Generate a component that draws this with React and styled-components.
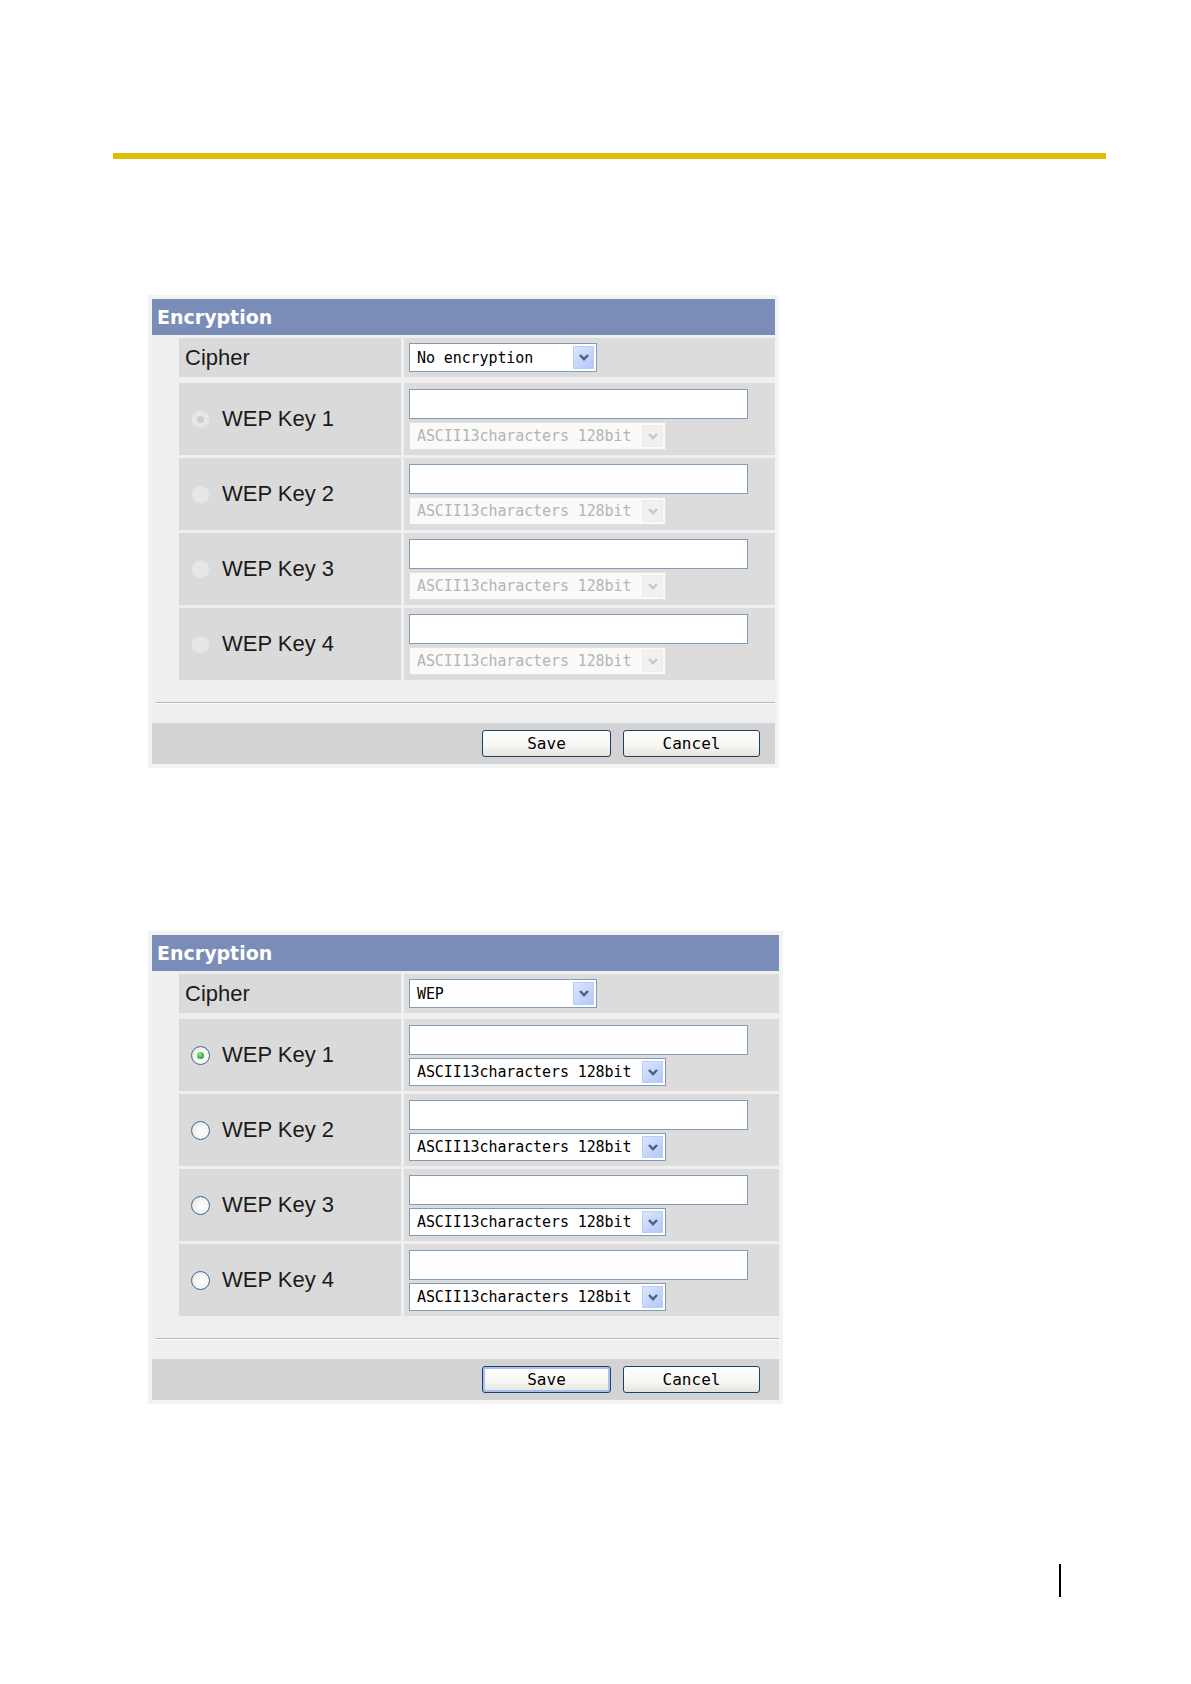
import styled, { createGlobalStyle } from "styled-components";

const GlobalStyle = createGlobalStyle`
  body {
    margin: 0;
    background: #ffffff;
  }
`;

const panels = [
  { cipher: "No encryption", disabled: true, width: 623, gap: 136, pad: 15 },
  { cipher: "WEP", disabled: false, width: 627, gap: 163, pad: 19, focused: true },
];

const keys = [1, 2, 3, 4];

function Chevron({ disabled }) {
  return (
    <svg width="12" height="9" viewBox="0 0 12 9">
      <path
        d="M2 2 L6 6.2 L10 2"
        fill="none"
        stroke={disabled ? "#c9c9c9" : "#4d6185"}
        strokeWidth="2.4"
      />
    </svg>
  );
}

function Select({ value, width, height, disabled }) {
  return (
    <SelectBox $width={width} $height={height} $disabled={disabled}>
      <SelectText $disabled={disabled}>{value}</SelectText>
      <ArrowBox $disabled={disabled}>
        <Chevron disabled={disabled} />
      </ArrowBox>
    </SelectBox>
  );
}

function Panel({ panel }) {
  return (
    <Frame $gap={panel.gap}>
      <Inner $width={panel.width}>
        <Header>Encryption</Header>
        <Body>
          <Row>
            <LabelCell>
              <Label>Cipher</Label>
            </LabelCell>
            <ValueCell $short>
              <Select value={panel.cipher} width={188} height={29} />
            </ValueCell>
          </Row>
          {keys.map((n) => (
            <Row key={n} $tall>
              <LabelCell $withRadio>
                <Radio $disabled={panel.disabled} $checked={n === 1} />
                <Label>WEP Key {n}</Label>
              </LabelCell>
              <ValueCell>
                <TextInput />
                <Select
                  value="ASCII13characters 128bit"
                  width={257}
                  height={28}
                  disabled={panel.disabled}
                />
              </ValueCell>
            </Row>
          ))}
        </Body>
        <Separator />
        <Footer $pad={panel.pad}>
          <Button $focused={panel.focused} $width={129}>
            Save
          </Button>
          <Button $width={137}>Cancel</Button>
        </Footer>
      </Inner>
    </Frame>
  );
}

function App() {
  return (
    <Page>
      <GlobalStyle />
      <Rule />
      {panels.map((p, i) => (
        <Panel key={i} panel={p} />
      ))}
      <PageMark />
    </Page>
  );
}

export default App;

const Page = styled.div`
  padding: 153px 0 80px 113px;
  font-family: "Liberation Sans", Arial, sans-serif;
`;

const Rule = styled.div`
  width: 993px;
  height: 6px;
  background-color: #dfbd05;
`;

const Frame = styled.div`
  margin: ${(p) => p.$gap}px 0 0 35px;
  padding: 4px;
  background-color: #f3f3f3;
  display: inline-block;
`;

const Inner = styled.div`
  width: ${(p) => p.$width}px;
  background-color: #efefef;
`;

const Header = styled.div`
  height: 36px;
  display: flex;
  align-items: center;
  padding-left: 5px;
  background-color: #7a8db8;
  color: #ffffff;
  font-family: "DejaVu Sans", Verdana, sans-serif;
  font-weight: bold;
  font-size: 19px;
`;

const Body = styled.div`
  display: flex;
  flex-direction: column;
  gap: 3px;
  padding: 3px 0 0 27px;

  & > *:first-child {
    margin-bottom: 3px;
  }
`;

const Row = styled.div`
  display: flex;
  gap: 3px;
  height: ${(p) => (p.$tall ? 72 : 39)}px;
`;

const LabelCell = styled.div`
  width: 222px;
  display: flex;
  align-items: center;
  gap: 12px;
  padding-left: ${(p) => (p.$withRadio ? 12 : 6)}px;
  background-color: #dadada;
  box-sizing: border-box;
`;

const Label = styled.span`
  font-size: 22px;
  color: #1a1a1a;
`;

const ValueCell = styled.div`
  flex: 1;
  display: flex;
  flex-direction: column;
  gap: 3px;
  padding: ${(p) => (p.$short ? "5px" : "6px")} 5px 0 5px;
  background-color: #dcdcdc;
`;

const Radio = styled.span`
  position: relative;
  width: 19px;
  height: 19px;
  flex: none;
  border-radius: 50%;
  box-sizing: border-box;
  border: 1px solid ${(p) => (p.$disabled ? "#dedede" : "#3e6a96")};
  background: ${(p) =>
    p.$disabled
      ? "#e6e6e6"
      : "radial-gradient(circle at 60% 60%, #ffffff 0%, #f2f2ee 55%, #d6d6ce 100%)"};

  &::after {
    content: "";
    display: ${(p) => (p.$checked ? "block" : "none")};
    position: absolute;
    left: 5px;
    top: 5px;
    width: 7px;
    height: 7px;
    border-radius: 50%;
    background: ${(p) =>
      p.$disabled
        ? "#cdcdcd"
        : "radial-gradient(circle at 40% 35%, #8cf08c 0%, #28a428 70%, #1d8a1d 100%)"};
  }
`;

const TextInput = styled.div`
  width: 339px;
  height: 30px;
  box-sizing: border-box;
  border: 1px solid #7f9db9;
  background-color: #ffffff;
`;

const SelectBox = styled.div`
  width: ${(p) => p.$width}px;
  height: ${(p) => p.$height}px;
  box-sizing: border-box;
  display: flex;
  align-items: center;
  justify-content: space-between;
  padding: 2px 2px 2px 7px;
  border: 1px solid ${(p) => (p.$disabled ? "#e2e2dc" : "#7f9db9")};
  background-color: ${(p) => (p.$disabled ? "#fafafa" : "#ffffff")};
`;

const SelectText = styled.span`
  font-family: "DejaVu Sans Mono", "Liberation Mono", monospace;
  font-size: 15px;
  letter-spacing: -0.1px;
  color: ${(p) => (p.$disabled ? "#b4b4b4" : "#000000")};
`;

const ArrowBox = styled.span`
  width: 21px;
  height: 100%;
  display: flex;
  align-items: center;
  justify-content: center;
  box-sizing: border-box;
  border: 1px solid ${(p) => (p.$disabled ? "#ececec" : "#b9cdf6")};
  background: ${(p) =>
    p.$disabled
      ? "#f1f1f1"
      : "linear-gradient(135deg, #dce6fd 0%, #c3d4fb 60%, #b3c8f7 100%)"};
`;

const Separator = styled.div`
  margin: 22px 0 0 4px;
  border-top: 1px solid #b9b9b3;
  border-bottom: 1px solid #fbfbfb;
`;

const Footer = styled.div`
  margin-top: 19px;
  height: 41px;
  display: flex;
  align-items: center;
  justify-content: flex-end;
  gap: 12px;
  padding-right: ${(p) => p.$pad}px;
  background-color: #d3d3d3;
`;

const Button = styled.div`
  width: ${(p) => p.$width}px;
  height: 27px;
  box-sizing: border-box;
  display: flex;
  align-items: center;
  justify-content: center;
  border: 1px solid #1c3f6e;
  border-radius: 3px;
  background: linear-gradient(#ffffff 0%, #f6f6f2 60%, #e4e3dc 100%);
  box-shadow: ${(p) => (p.$focused ? "inset 0 0 0 2px #a9c0ec" : "none")};
  font-family: "DejaVu Sans Mono", "Liberation Mono", monospace;
  font-size: 16px;
  color: #000000;
`;

const PageMark = styled.div`
  margin: 160px 0 0 946px;
  width: 2px;
  height: 33px;
  background-color: #000000;
`;
